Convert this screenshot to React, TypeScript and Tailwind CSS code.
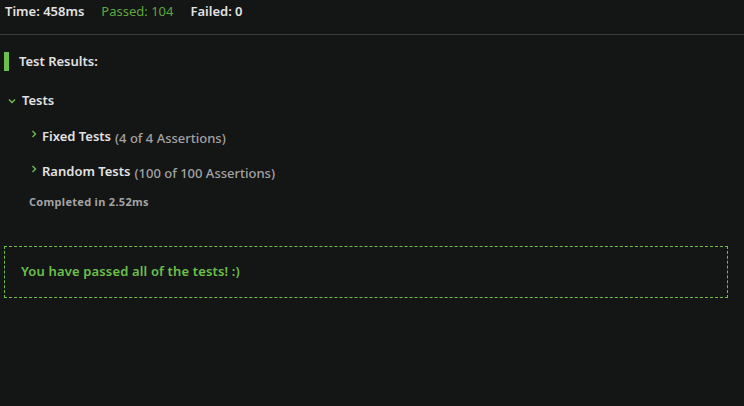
import React from "react";

const Chevron = ({ dir }: { dir: "down" | "right" }) => (
  <svg width="8" height="8" viewBox="0 0 8 8" className="shrink-0">
    {dir === "down" ? (
      <path d="M1 2.5 L4 5.5 L7 2.5" stroke="#6cc04a" strokeWidth="1.4" fill="none" />
    ) : (
      <path d="M2.5 1 L5.5 4 L2.5 7" stroke="#6cc04a" strokeWidth="1.4" fill="none" />
    )}
  </svg>
);

export default function App() {
  return (
    <div
      className="w-[744px] h-[406px] bg-[#141515] text-[#e2e2e2] overflow-hidden"
      style={{ fontFamily: "'Noto Sans', 'Open Sans', sans-serif" }}
    >
      <div className="h-[35px] border-b border-[#3c3c3c] flex items-start pl-[5px] pt-[2px] text-[13px] font-semibold gap-[17px]">
        <span>Time: 458ms</span>
        <span className="text-[#5da83e] font-normal">Passed: 104</span>
        <span>Failed: 0</span>
      </div>
      <div className="pl-[4px] pt-[17px]">
        <div className="flex items-center h-[19px]">
          <div className="w-[5px] h-[19px] bg-[#6cc04a]" />
          <span className="ml-[10px] text-[13px] font-semibold">Test Results:</span>
        </div>
        <div className="flex items-center mt-[20px] pl-[4px] gap-[6px]">
          <Chevron dir="down" />
          <span className="text-[13px] font-semibold">Tests</span>
        </div>
        <div className="pl-[26px] mt-[16px] flex items-baseline gap-[4px]">
          <span className="self-start mt-[3px]"><Chevron dir="right" /></span>
          <span className="text-[13px] font-semibold">Fixed Tests</span>
          <span className="text-[13px] font-medium text-[#a3a3a3] translate-y-[2px]">(4 of 4 Assertions)</span>
        </div>
        <div className="pl-[26px] mt-[16px] flex items-baseline gap-[4px]">
          <span className="self-start mt-[3px]"><Chevron dir="right" /></span>
          <span className="text-[13px] font-semibold">Random Tests</span>
          <span className="text-[13px] font-medium text-[#a3a3a3] translate-y-[2px]">(100 of 100 Assertions)</span>
        </div>
        <div className="pl-[25px] mt-[12px] text-[11px] font-bold tracking-[0.3px] text-[#a3a3a3]">Completed in 2.52ms</div>
        <div className="mt-[36px] w-[724px] h-[52px] border border-dashed border-[#6cc04a] flex items-center pl-[16px]">
          <span className="text-[13px] font-semibold tracking-[0.15px] text-[#6cc04a]">You have passed all of the tests! :)</span>
        </div>
      </div>
    </div>
  );
}
